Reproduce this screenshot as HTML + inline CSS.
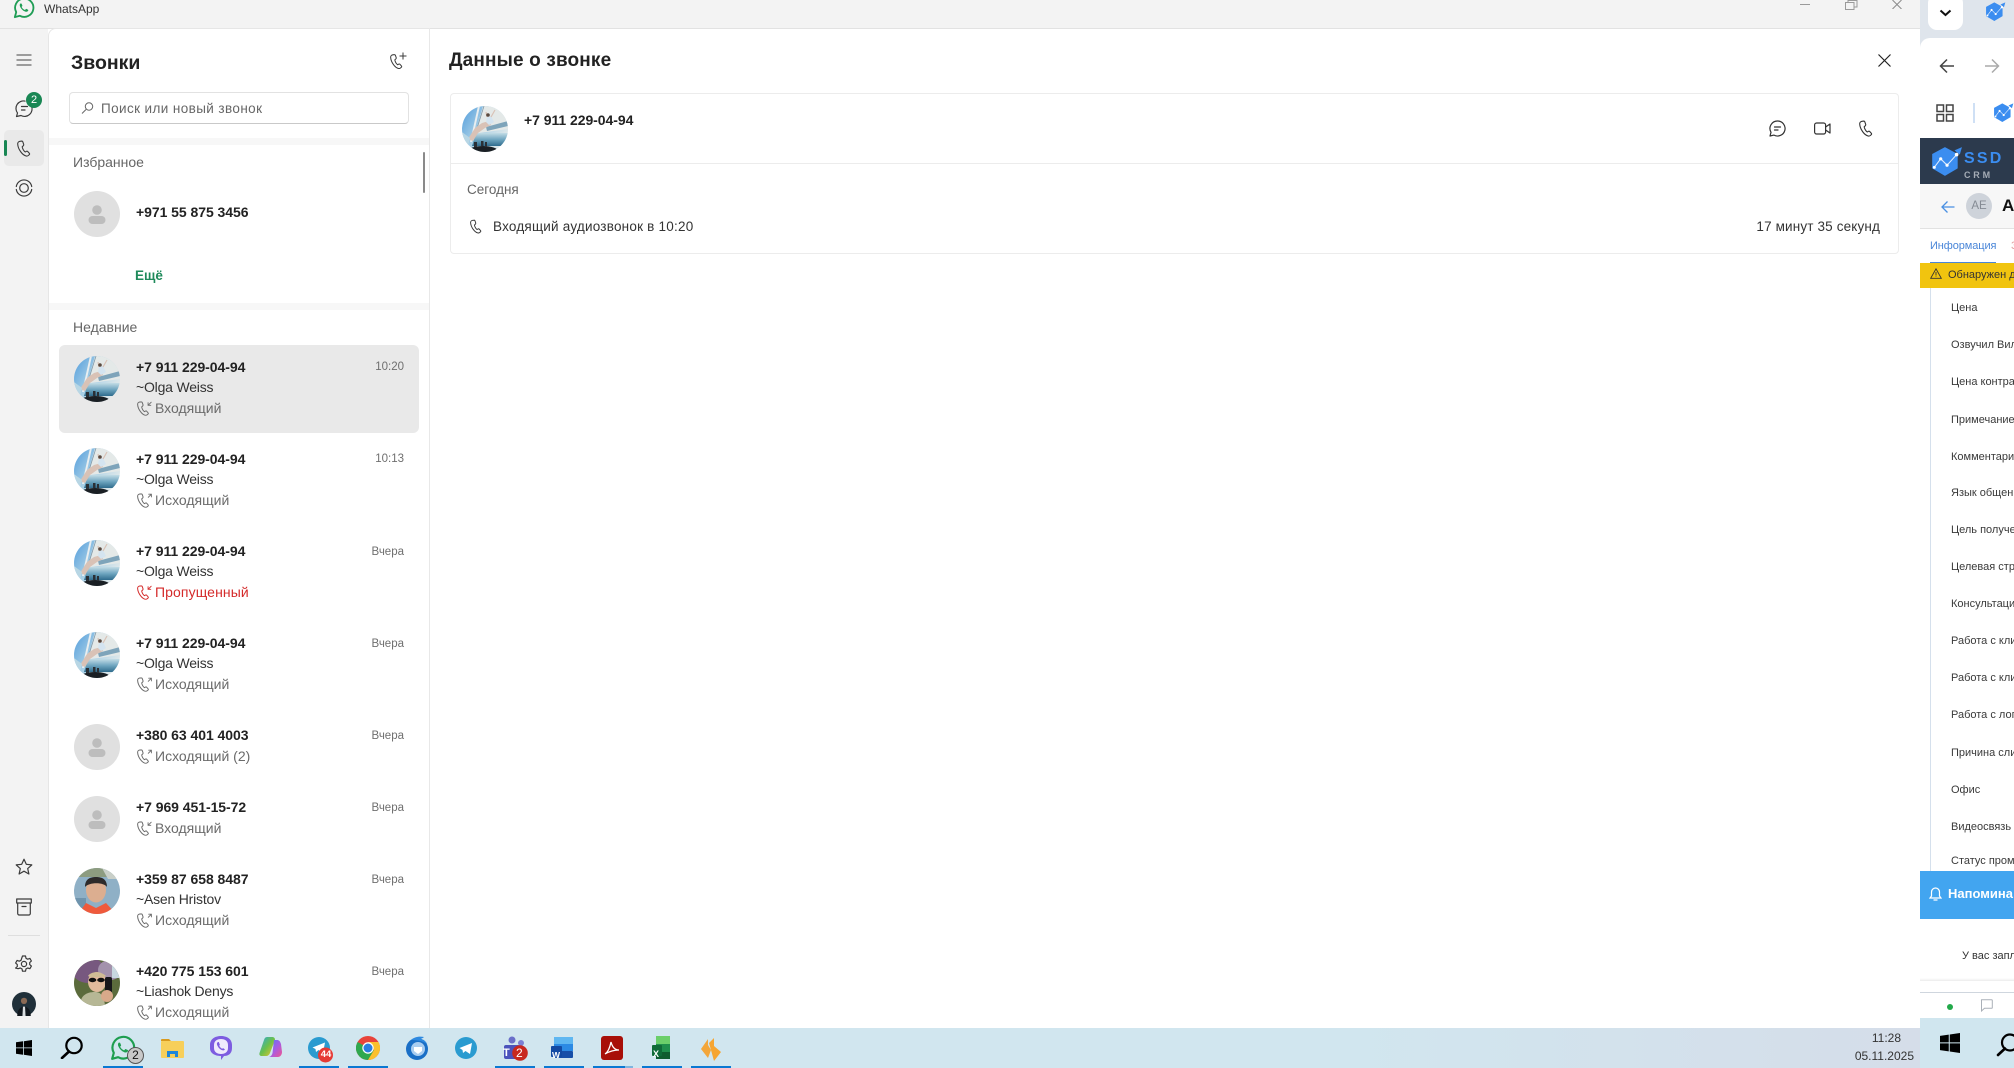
<!DOCTYPE html>
<html lang="ru"><head><meta charset="utf-8"><title>WhatsApp</title>
<style>
html,body{margin:0;padding:0;background:#fff}
#p{position:relative;width:2014px;height:1068px;overflow:hidden;background:#fff;font-family:"Liberation Sans",sans-serif;color:#222}
#p div,#p svg{position:absolute}
.t{white-space:nowrap;line-height:20px;height:20px;font-size:14px}
.n{font-weight:700;font-size:14px;color:#222;left:136px;letter-spacing:-.05px}
.m{left:136px;font-size:14px;color:#333;letter-spacing:-.2px}
.s{left:155px;font-size:14px;color:#6b6b6b}
.d{right:1610px;font-size:11.500px;color:#6f6f6f}
.l{left:1951px;font-size:11px;color:#3a3a3a}
.i{fill:none;stroke:#3b3b3b;stroke-width:1.2;stroke-linecap:round;stroke-linejoin:round}
.u{height:2px;top:1066px;background:#0a78d2}
</style></head><body>
<div id="p">
<svg width="0" height="0" style="position:absolute">
<defs>
<linearGradient id="sky" x1="0" y1="0" x2="1" y2=".6"><stop offset="0" stop-color="#4f9bdc"/><stop offset=".5" stop-color="#a9d0e6"/><stop offset="1" stop-color="#dfe8ea"/></linearGradient>
<linearGradient id="sea" x1="0" y1="0" x2="0" y2="1"><stop offset="0" stop-color="#c3dce6"/><stop offset=".5" stop-color="#6fa6c0"/><stop offset="1" stop-color="#2f6c8d"/></linearGradient>
<clipPath id="c46"><circle cx="23" cy="23" r="23"/></clipPath>
<symbol id="phone" viewBox="0 0 14 16"><path d="M3 .8 4.800.6c.5 0 .8.2 1 .7l.9 2.600c.1.5 0 .9-.3 1.200L5.200 6.300c.3 1.600 1.500 4 3 5.200l1.300-.7c.4-.2.9-.1 1.200.2l1.600 1.800c.4.4.4 1 0 1.300l-1 .9c-.6.5-1.400.7-2.200.5C5.600 14.700 1 9 .7 3.500.6 2.200 1.600 1 3 .8z" fill="none" stroke="currentColor" stroke-width="1.100" stroke-linejoin="round"/></symbol>
<symbol id="inc" viewBox="0 0 20 16"><use href="#phone" x="0" y="0" width="14" height="16"/><path d="M15.800 1 12.500 4.300M12.300 1.500v3h3" fill="none" stroke="currentColor" stroke-width="1" stroke-linecap="round"/></symbol>
<symbol id="out" viewBox="0 0 20 16"><use href="#phone" x="0" y="0" width="14" height="16"/><path d="M12.500 4.500 15.800 1.200M13 1h3v3" fill="none" stroke="currentColor" stroke-width="1" stroke-linecap="round"/></symbol>
<symbol id="sail" viewBox="0 0 46 46"><g clip-path="url(#c46)">
<rect width="46" height="46" fill="url(#sky)"/>
<path d="M21 0H46V23L17 27 12 32Z" fill="#e4e9e8"/>
<path d="M16 0 8 36H10L18 0Z" fill="#e9eef0"/>
<path d="M22 0 12 32" stroke="#7d97a8" stroke-width=".8" fill="none"/>
<path d="M24 21 46 15V20L25 25Z" fill="#7ea4ba"/>
<path d="M14 27H46V40H10Z" fill="url(#sea)"/>
<path d="M6 33 13 22 20 17 27 15 29 19 23 22 16 27 11 35Z" fill="#d9c2b6"/>
<path d="M25 11 29 10 32 16 27 19 24 16Z" fill="#d4e4f0"/>
<path d="M29 11 33 4M25 11 24 6" stroke="#d9c2b6" stroke-width="1.200" fill="none"/>
<circle cx="26" cy="9" r="1.800" fill="#5a4a40"/>
<ellipse cx="21" cy="45" rx="15" ry="5" fill="#1a1f24"/>
<path d="M12 36h3v5h-3zM19 35h2.500v5H19zM23 36h2v5h-2z" fill="#2a3036"/>
<path d="M0 26 8 32 6 40 0 38Z" fill="#b8d6e4"/>
</g></symbol>
<symbol id="gray" viewBox="0 0 46 46"><circle cx="23" cy="23" r="23" fill="#e0e0e0"/><circle cx="23" cy="19" r="4.800" fill="#bdbdbd"/><rect x="14.500" y="25" width="17" height="8" rx="4" fill="#bdbdbd"/></symbol>
<symbol id="wa" viewBox="0 0 24 24"><path d="M2 22 3.500 16.500A10 10 0 1 1 7.500 20.500Z" fill="none" stroke="currentColor" stroke-width="2" stroke-linejoin="round"/><path d="M8.500 6.800c-1 .6-1.400 1.700-1 3 .9 2.900 3.500 5.300 6 6.200 1.300.4 2.500-.1 3.100-1.200.2-.4.100-.7-.2-.9l-1.800-.9c-.3-.1-.5-.1-.7.2l-.6.8c-.2.2-.4.2-.6.1-1.400-.6-2.600-1.700-3.200-3-.1-.2-.1-.4.100-.6l.5-.6c.2-.2.200-.4.100-.6l-.8-1.900c-.2-.4-.7-.4-.9-.1z" fill="currentColor"/></symbol>
<symbol id="win" viewBox="0 0 16 16"><path d="M0 2.300 7 1.300V7.500H0ZM7.800 1.200 16 0V7.500H7.800ZM0 8.300H7V14.700L0 13.700ZM7.800 8.300H16V16L7.800 14.800Z" fill="#000"/></symbol>
<symbol id="hex" viewBox="0 0 32 32"><path d="M15 2 27 8.500V22L15 29 3 22V8.500Z" fill="#3b8df0"/><path d="M5 21 11 13 17 19 26 9" fill="none" stroke="#dcebff" stroke-width="1"/><path d="M24 5 31 2 29 9Z" fill="#3b8df0"/><circle cx="11" cy="13" r="1.500" fill="#fff"/><circle cx="17" cy="19" r="1.500" fill="#fff"/><circle cx="26" cy="9" r="1.700" fill="#fff"/><circle cx="5" cy="21" r="1.400" fill="#fff"/></symbol>
</defs></svg>

<!-- title bar -->
<div style="left:0;top:0;width:1920px;height:28px;background:#f3f3f3;border-bottom:1px solid #e2e2e2"></div>
<svg style="left:13px;top:-3px;color:#1f9d55" width="22" height="22"><use href="#wa" width="22" height="22"/></svg>
<div class="t" style="left:44px;top:-1px;font-size:12px;color:#333">WhatsApp</div>
<div style="left:1800px;top:4px;width:10px;height:1px;background:#9a9a9a"></div>
<svg style="left:1845px;top:0" width="13" height="10"><path d="M.5 2.500h8.500v7H.5zM3 2.500V.5h9v6.500h-3" fill="none" stroke="#9a9a9a"/></svg>
<svg style="left:1892px;top:0" width="10" height="9"><path d="M.5 0 9.500 9M9.500 0 .5 9" stroke="#8a8a8a" stroke-width="1"/></svg>

<!-- rail -->
<div style="left:0;top:29px;width:48px;height:999px;background:#f3f3f3"></div>
<div style="left:48px;top:28px;width:382px;height:1000px;background:#fff;border-left:1px solid #e6e6e6;border-top:1px solid #e6e6e6;border-top-left-radius:8px;box-sizing:border-box;border-right:1px solid #e8e8e8"></div>
<svg style="left:16px;top:54px" width="16" height="12"><path d="M.5 1H15.500M.5 6H15.500M.5 11H15.500" stroke="#444" stroke-width="1"/></svg>
<svg style="left:15px;top:99px" width="20" height="19"><path class="i" d="M16.500 7a7.500 7.500 0 0 1-10.500 9.500L1.500 17.500l1-3.500A7.500 7.500 0 0 1 10 2.100M6.500 7.500h6M6.500 11h3.500"/></svg>
<div style="left:26px;top:92px;width:16px;height:16px;border-radius:50%;background:#198754;color:#fff;font-size:11px;line-height:16px;text-align:center">2</div>
<div style="left:4px;top:130px;width:40px;height:36px;background:#e9e9e9;border-radius:5px"></div>
<div style="left:4px;top:140px;width:3px;height:16px;background:#198754;border-radius:2px"></div>
<svg style="left:17px;top:140px;color:#3b3b3b" width="14" height="17"><use href="#phone" width="14" height="17"/></svg>
<svg style="left:15px;top:179px" width="18" height="18"><circle cx="9" cy="9" r="4.300" class="i"/><path class="i" d="M1.300 7.500A7.800 7.800 0 0 1 16.700 7.500M1.300 10.500A7.800 7.800 0 0 0 16.700 10.500"/></svg>
<svg style="left:15px;top:858px" width="18" height="17"><path class="i" d="M9 1.200 11.300 6.300 16.800 6.900 12.700 10.600 13.900 16 9 13.200 4.100 16 5.300 10.600 1.200 6.900 6.700 6.300Z"/></svg>
<svg style="left:16px;top:898px" width="16" height="18"><path class="i" d="M.7 1h14.600v4H.7zM1.700 5v10.500a1.500 1.500 0 0 0 1.500 1.500h9.600a1.500 1.500 0 0 0 1.500-1.500V5M6 8.500h4"/></svg>
<div style="left:8px;top:935px;width:32px;height:1px;background:#dedede"></div>
<svg style="left:15px;top:955px" width="18" height="18" viewBox="0 0 18 18"><circle cx="9" cy="9" r="2.600" class="i"/><path class="i" d="M7.500 1h3l.5 2.300 1.700.9 2.200-.8 1.500 2.600-1.700 1.600v2l1.700 1.500-1.500 2.600-2.200-.7-1.700.9-.5 2.300h-3l-.5-2.300-1.700-.9-2.200.7L.6 13.100l1.700-1.500v-2L.6 8 2.100 5.400l2.200.8 1.700-.9z"/></svg>
<svg style="left:12px;top:992px" width="24" height="24" viewBox="0 0 23 23"><circle cx="11.500" cy="11.500" r="11.500" fill="#20303a"/><circle cx="11.500" cy="8.500" r="3" fill="#8a6a55"/><path d="M5 23c0-6 3-9 6.500-9s6.500 3 6.500 9z" fill="#11181e"/><path d="M10.500 14h2l.5 9h-3z" fill="#d8dde0"/></svg>

<!-- list header -->
<div class="t" style="left:71px;top:53px;font-size:19.500px;font-weight:700;color:#222;line-height:20px">Звонки</div>
<svg style="left:390px;top:52px;color:#3b3b3b" width="18" height="18" viewBox="0 0 18 18"><use href="#phone" x="0" y="2" width="13" height="15"/><path d="M13 .5V7.500M9.500 4H16.500" stroke="#3b3b3b" stroke-width="1" fill="none"/></svg>
<div style="left:69px;top:92px;width:340px;height:32px;box-sizing:border-box;border:1px solid #e2e2e2;border-bottom-color:#c9c9c9;border-radius:4px;background:#fff"></div>
<svg style="left:81px;top:102px" width="13" height="12"><circle cx="8" cy="4.500" r="3.700" fill="none" stroke="#666"/><path d="M5 7.500 1 11.500" stroke="#666"/></svg>
<div class="t" style="left:101px;top:99px;font-size:13.500px;color:#666;letter-spacing:.4px">Поиск или новый звонок</div>
<div style="left:49px;top:138px;width:380px;height:7px;background:#f7f7f7"></div>
<div style="left:423px;top:152px;width:2px;height:41px;background:#8a8a8a;border-radius:1px"></div>
<div class="t" style="left:73px;top:152px;color:#666;font-size:14px">Избранное</div>
<svg style="left:74px;top:191px" width="46" height="46"><use href="#gray" width="46" height="46"/></svg>
<div class="t n" style="top:202px">+971 55 875 3456</div>
<div class="t" style="left:135px;top:266px;font-size:13.500px;font-weight:700;color:#1f8a5b">Ещё</div>
<div style="left:49px;top:303px;width:380px;height:7px;background:#f7f7f7"></div>
<div class="t" style="left:73px;top:317px;color:#666;font-size:14px">Недавние</div>

<!-- rows -->
<div style="left:59px;top:345px;width:360px;height:88px;background:#e9e9e9;border-radius:6px"></div>

<svg style="left:74px;top:356px" width="46" height="46"><use href="#sail" width="46" height="46"/></svg>
<div class="t n" style="top:357px">+7 911 229-04-94</div><div class="t d" style="top:357px">10:20</div>
<div class="t m" style="top:377px">~Olga Weiss</div>
<svg style="left:137px;top:401px;color:#6b6b6b" width="18" height="15"><use href="#inc" width="18" height="15"/></svg><div class="t s" style="top:398px">Входящий</div>

<svg style="left:74px;top:448px" width="46" height="46"><use href="#sail" width="46" height="46"/></svg>
<div class="t n" style="top:449px">+7 911 229-04-94</div><div class="t d" style="top:449px">10:13</div>
<div class="t m" style="top:469px">~Olga Weiss</div>
<svg style="left:137px;top:493px;color:#6b6b6b" width="18" height="15"><use href="#out" width="18" height="15"/></svg><div class="t s" style="top:490px">Исходящий</div>

<svg style="left:74px;top:540px" width="46" height="46"><use href="#sail" width="46" height="46"/></svg>
<div class="t n" style="top:541px">+7 911 229-04-94</div><div class="t d" style="top:542px">Вчера</div>
<div class="t m" style="top:561px">~Olga Weiss</div>
<svg style="left:137px;top:585px;color:#d42a2a" width="18" height="15"><use href="#inc" width="18" height="15"/></svg><div class="t s" style="top:582px;color:#d42a2a;letter-spacing:.1px">Пропущенный</div>

<svg style="left:74px;top:632px" width="46" height="46"><use href="#sail" width="46" height="46"/></svg>
<div class="t n" style="top:633px">+7 911 229-04-94</div><div class="t d" style="top:634px">Вчера</div>
<div class="t m" style="top:653px">~Olga Weiss</div>
<svg style="left:137px;top:677px;color:#6b6b6b" width="18" height="15"><use href="#out" width="18" height="15"/></svg><div class="t s" style="top:674px">Исходящий</div>

<svg style="left:74px;top:724px" width="46" height="46"><use href="#gray" width="46" height="46"/></svg>
<div class="t n" style="top:725px">+380 63 401 4003</div><div class="t d" style="top:726px">Вчера</div>
<svg style="left:137px;top:749px;color:#6b6b6b" width="18" height="15"><use href="#out" width="18" height="15"/></svg><div class="t s" style="top:746px">Исходящий (2)</div>

<svg style="left:74px;top:796px" width="46" height="46"><use href="#gray" width="46" height="46"/></svg>
<div class="t n" style="top:797px">+7 969 451-15-72</div><div class="t d" style="top:798px">Вчера</div>
<svg style="left:137px;top:821px;color:#6b6b6b" width="18" height="15"><use href="#inc" width="18" height="15"/></svg><div class="t s" style="top:818px">Входящий</div>

<svg style="left:74px;top:868px" width="46" height="46" viewBox="0 0 46 46"><g clip-path="url(#c46)"><rect width="46" height="46" fill="#8fb0c6"/><rect width="46" height="9" fill="#8d9c80"/><path d="M28 0H46V11H34Z" fill="#c9cfc8"/><rect y="30" width="12" height="10" fill="#6f94ad"/><ellipse cx="22" cy="22" rx="10" ry="12.500" fill="#dcae90"/><path d="M11 19c0-8 5-10 11-10s11 2 11 10c-3-5-18-5-22 0z" fill="#2d2a2a"/><path d="M12 35 22 40 32 35 42 46H4Z" fill="#ef5a3c"/></g></svg>
<div class="t n" style="top:869px">+359 87 658 8487</div><div class="t d" style="top:870px">Вчера</div>
<div class="t m" style="top:889px">~Asen Hristov</div>
<svg style="left:137px;top:913px;color:#6b6b6b" width="18" height="15"><use href="#out" width="18" height="15"/></svg><div class="t s" style="top:910px">Исходящий</div>

<svg style="left:74px;top:960px" width="46" height="46" viewBox="0 0 46 46"><g clip-path="url(#c46)"><rect width="46" height="46" fill="#5b6b3c"/><ellipse cx="14" cy="10" rx="16" ry="13" fill="#77587f"/><ellipse cx="36" cy="10" rx="12" ry="10" fill="#a392ac"/><rect x="38" y="0" width="8" height="18" fill="#c8d8e0"/><ellipse cx="23" cy="22" rx="9" ry="10" fill="#e0ba9c"/><path d="M14 16c3-5 13-5 18 0l-2 1H16z" fill="#d0bd95"/><ellipse cx="18.500" cy="20" rx="3.800" ry="2.200" fill="#111"/><ellipse cx="27" cy="20" rx="3.800" ry="2.200" fill="#111"/><path d="M6 46c0-10 6-14 15-14 5 0 9 3 10 14z" fill="#b6b795"/><rect x="31" y="17" width="7" height="16" rx="2" fill="#17171a"/><ellipse cx="33" cy="36" rx="6" ry="6" fill="#d8a98a"/></g></svg>
<div class="t n" style="top:961px">+420 775 153 601</div><div class="t d" style="top:962px">Вчера</div>
<div class="t m" style="top:981px">~Liashok Denys</div>
<svg style="left:137px;top:1005px;color:#6b6b6b" width="18" height="15"><use href="#out" width="18" height="15"/></svg><div class="t s" style="top:1002px">Исходящий</div>

<!-- detail -->
<div class="t" style="left:449px;top:51px;font-size:19px;font-weight:700;color:#222;letter-spacing:.15px">Данные о звонке</div>
<svg style="left:1878px;top:54px" width="13" height="13"><path d="M.5.5 12.500 12.500M12.500.5.5 12.500" stroke="#222" stroke-width="1.200"/></svg>
<div style="left:450px;top:93px;width:1449px;height:161px;box-sizing:border-box;border:1px solid #ececec;border-radius:4px;background:#fff"></div>
<div style="left:451px;top:163px;width:1447px;height:1px;background:#ececec"></div>
<svg style="left:462px;top:106px" width="46" height="46"><use href="#sail" width="46" height="46"/></svg>
<div class="t" style="left:524px;top:110px;font-size:14px;font-weight:700;color:#222;letter-spacing:-.05px">+7 911 229-04-94</div>
<svg style="left:1769px;top:120px" width="17" height="17"><path class="i" style="stroke:#333" d="M8.500 1a7.500 7.500 0 1 1-3.500 14.100L1 16l1-3.700A7.500 7.500 0 0 1 8.500 1zM5.500 7h6M5.500 10h3.500"/></svg>
<svg style="left:1814px;top:122px" width="17" height="14"><rect x=".6" y="1" width="11" height="11" rx="2" class="i" style="stroke:#333"/><path class="i" style="stroke:#333" d="M11.600 5 16 2v9l-4.400-3"/></svg>
<svg style="left:1859px;top:120px;color:#333" width="14" height="17"><use href="#phone" width="14" height="17"/></svg>
<div class="t" style="left:467px;top:180px;font-size:13.500px;color:#666">Сегодня</div>
<svg style="left:470px;top:219px;color:#333" width="12" height="15"><use href="#phone" width="12" height="15"/></svg>
<div class="t" style="left:493px;top:217px;font-size:13.500px;color:#333;letter-spacing:.22px">Входящий аудиозвонок в 10:20</div>
<div class="t" style="right:134px;top:217px;font-size:13.500px;color:#333;letter-spacing:.15px">17 минут 35 секунд</div>

<!-- browser -->
<div style="left:1920px;top:0;width:94px;height:1018px;background:#dfe5ec"></div>
<div style="left:1928px;top:-6px;width:35px;height:36px;background:#fff;border-radius:9px"></div>
<svg style="left:1939px;top:9px" width="13" height="8"><path d="M1.500 1.500 6.500 6 11.500 1.500" fill="none" stroke="#111" stroke-width="2"/></svg>
<svg style="left:1984px;top:1px" width="22" height="22"><use href="#hex" width="22" height="22"/></svg>
<div style="left:1920px;top:38px;width:94px;height:980px;background:#fff;border-top-left-radius:10px"></div>
<svg style="left:1939px;top:58px" width="16" height="16"><path d="M15 8H1.500M8 1.500 1.500 8 8 14.500" fill="none" stroke="#444" stroke-width="1.500"/></svg>
<svg style="left:1984px;top:58px" width="16" height="16"><path d="M1 8H14.500M8 1.500 14.500 8 8 14.500" fill="none" stroke="#aaa" stroke-width="1.500"/></svg>
<svg style="left:1936px;top:104px" width="18" height="18"><path d="M1 1h6.500v6.500H1zM10.500 1H17v6.500h-6.500zM1 10.500h6.500V17H1zM10.500 10.500H17V17h-6.500z" fill="none" stroke="#444" stroke-width="1.500"/></svg>
<div style="left:1973px;top:103px;width:2px;height:20px;background:#cfe0f5"></div>
<svg style="left:1992px;top:102px" width="22" height="22"><use href="#hex" width="22" height="22"/></svg>
<div style="left:1920px;top:138px;width:94px;height:46px;background:#2c3a4d"></div>
<svg style="left:1929px;top:145px" width="34" height="34"><use href="#hex" width="34" height="34"/></svg>
<div class="t" style="left:1964px;top:149px;font-size:16px;font-weight:700;color:#3b8df0;letter-spacing:2.200px">SSD</div>
<div class="t" style="left:1964px;top:165px;font-size:9px;font-weight:700;color:#a5acb6;letter-spacing:2.800px">CRM</div>
<div style="left:1920px;top:184px;width:94px;height:45px;background:#f7f7f7;border-bottom:1px solid #e2e2e2;box-sizing:border-box"></div>
<svg style="left:1941px;top:200px" width="14" height="14"><path d="M13.500 7H1M6.500 1.500 1 7l5.500 5.500" fill="none" stroke="#4a90e2" stroke-width="1.300"/></svg>
<div style="left:1966px;top:193px;width:26px;height:26px;border-radius:50%;background:#ced3da;color:#858b94;font-size:11.500px;line-height:26px;text-align:center">AE</div>
<div class="t" style="left:2002px;top:196px;font-size:17px;font-weight:700;color:#111">A</div>
<div class="t" style="left:1930px;top:236px;font-size:11px;color:#4a86d8;letter-spacing:-.1px">Информация</div>
<div class="t" style="left:2011px;top:236px;font-size:11px;color:#e3a5a5">З</div>
<div style="left:1930px;top:262px;width:66px;height:1px;background:#4a86d8"></div>
<div style="left:1920px;top:263px;width:94px;height:25px;background:#f1c40f"></div>
<svg style="left:1930px;top:268px" width="12" height="11"><path d="M6 .8 11.300 10.300H.7ZM6 4v3.500M6 8.500v.5" fill="none" stroke="#333" stroke-width=".9"/></svg>
<div class="t" style="left:1948px;top:265px;font-size:11px;color:#333">Обнаружен д</div>
<div style="left:1930px;top:288px;width:1px;height:583px;background:#d5e0ec"></div>
<div class="t l" style="top:298px">Цена</div>
<div class="t l" style="top:335px">Озвучил Вил</div>
<div class="t l" style="top:372px">Цена контра</div>
<div class="t l" style="top:410px">Примечание</div>
<div class="t l" style="top:447px">Комментари</div>
<div class="t l" style="top:483px">Язык общени</div>
<div class="t l" style="top:520px">Цель получе</div>
<div class="t l" style="top:557px">Целевая стра</div>
<div class="t l" style="top:594px">Консультаци</div>
<div class="t l" style="top:631px">Работа с кли</div>
<div class="t l" style="top:668px">Работа с кли</div>
<div class="t l" style="top:705px">Работа с лог</div>
<div class="t l" style="top:743px">Причина сли</div>
<div class="t l" style="top:780px">Офис</div>
<div class="t l" style="top:817px">Видеосвязь с</div>
<div class="t l" style="top:851px">Статус пром</div>
<div style="left:1920px;top:871px;width:94px;height:48px;background:#42a5f0"></div>
<svg style="left:1929px;top:887px" width="13" height="15"><path d="M6.500 1a4 4 0 0 0-4 4v4L1 11h11l-1.500-2V5a4 4 0 0 0-4-4zM4.500 13h4" fill="none" stroke="#fff" stroke-width="1.200"/></svg>
<div class="t" style="left:1948px;top:884px;font-size:13px;font-weight:700;color:#fff">Напомина</div>
<div class="t" style="left:1962px;top:946px;font-size:11px;color:#333">У вас запла</div>
<div style="left:1920px;top:978px;width:94px;height:3px;background:linear-gradient(#fff,#ececec)"></div>
<div style="left:1920px;top:992px;width:94px;height:1px;background:#cfd6de"></div>
<div style="left:1947px;top:1004px;width:6px;height:6px;border-radius:50%;background:#22a94a"></div>
<svg style="left:1980px;top:999px" width="13" height="13"><path d="M1.500.7h10a.8.8 0 0 1 .8.8v7a.8.8 0 0 1-.8.8H4.500L1.500 12V1.500a.8.8 0 0 1 0-.8z" fill="none" stroke="#aab0b8"/></svg>

<!-- taskbar -->
<div style="left:0;top:1028px;width:1920px;height:40px;background:linear-gradient(90deg,#d1e6ef 0,#d1e6ef 70%,#d5dde9 100%)"></div>
<div style="left:1920px;top:1018px;width:94px;height:50px;background:#d0e6ef"></div>
<svg style="left:16px;top:1040px" width="16" height="16"><use href="#win" width="16" height="16"/></svg>
<svg style="left:60px;top:1036px" width="24" height="23"><circle cx="14" cy="9.500" r="7.700" fill="none" stroke="#000" stroke-width="2.200"/><path d="M9 15.500 2 22" stroke="#000" stroke-width="2.600" stroke-linecap="round"/></svg>
<svg style="left:110px;top:1035px;color:#1e9e50" width="26" height="26"><use href="#wa" width="26" height="26"/></svg>
<div style="left:127px;top:1047px;width:15px;height:15px;border-radius:50%;background:#c9c9c9;border:1px solid #555;color:#111;font-size:12px;line-height:15px;text-align:center">2</div>
<svg style="left:161px;top:1038px" width="23" height="20"><path d="M0 2a1 1 0 0 1 1-1h7l2 2H0z" fill="#d99a1e"/><rect y="3" width="23" height="17" rx="1" fill="#f7cf5a"/><path d="M6 19v-6h11v6h-3v-3H9v3z" fill="#1f86d8"/></svg>
<svg style="left:210px;top:1036px" width="22" height="24"><path d="M11 0c6 0 11 3 11 9v3c0 6-4 8-8 8l-3 4v-4c-5 0-11-2-11-8V9c0-6 5-9 11-9z" fill="#7d5ce0"/><path d="M4 9c0-4 3-6 7-6s7 2 7 6v3c0 4-3 6-7 6s-7-2-7-6z" fill="#efeafc"/><path d="M8 6c-1 .5-1.300 1.500-1 2.500 1 3 3 5 5.500 5.800 1 .3 1.900 0 2.400-.9l-1.800-1.300-.9.700c-1.300-.6-2.400-1.700-3-3l.7-.9L8.800 6z" fill="#7d5ce0"/></svg>
<svg style="left:258px;top:1036px" width="24" height="24"><defs><linearGradient id="cp1" x1="0" y1="0" x2="1" y2="1"><stop offset="0" stop-color="#2aa8e0"/><stop offset=".5" stop-color="#6bc04b"/><stop offset="1" stop-color="#f4c430"/></linearGradient><linearGradient id="cp2" x1="0" y1="0" x2="1" y2="1"><stop offset="0" stop-color="#4f7df0"/><stop offset=".5" stop-color="#a55ce6"/><stop offset="1" stop-color="#f0568f"/></linearGradient></defs><path d="M9 1h5c2 0 3 1 3 3l-5 13c-1 2-2 3-4 3H4c-2 0-3-1-2.500-3L6 4c.5-2 1.500-3 3-3z" fill="url(#cp1)"/><path d="M16 4h3c2 0 3 1 4 4l1 8c0 3-2 5-4 5h-9c2-.5 3-2 3.500-4z" fill="url(#cp2)"/></svg>
<svg style="left:308px;top:1036px" width="26" height="28"><circle cx="11" cy="12" r="11" fill="#2a9bd0"/><path d="M4.500 11.500 17 6.500 15 17 10.500 14 8 16 7.500 13Z" fill="#fff"/><circle cx="17.500" cy="19" r="7.500" fill="#e63a35"/></svg>
<div class="t" style="left:318px;top:1045px;width:16px;text-align:center;font-size:9.500px;color:#fff;font-weight:700">44</div>
<svg style="left:356px;top:1036px" width="24" height="24"><circle cx="12" cy="12" r="12" fill="#e8433a"/><path d="M12 12 1.600 6A12 12 0 0 0 12 24l6-10z" fill="#2fa84f"/><path d="M12 6h10.400A12 12 0 0 1 12 24l6-10z" fill="#fbc02d"/><circle cx="12" cy="12" r="5.700" fill="#fff"/><circle cx="12" cy="12" r="4.500" fill="#2a7de1"/></svg>
<svg style="left:405px;top:1036px" width="24" height="24"><circle cx="12" cy="13" r="11" fill="#1a6fc6"/><circle cx="13" cy="13" r="7" fill="#a9cdf0"/><path d="M9 11h8v4l-4 3-4-3z" fill="#fff"/><path d="M6 4c3-3 8-4 13-3-1 1-3 2-4 2 3 0 6 2 7 5-4-3-10-4-16-4z" fill="#2f8ae0"/></svg>
<svg style="left:455px;top:1037px" width="22" height="22"><circle cx="11" cy="11" r="11" fill="#2a9bd0"/><path d="M4.500 11 17 6 15 17 10.500 14 8 16 7.500 13Z" fill="#fff"/></svg>
<svg style="left:502px;top:1036px" width="26" height="26"><circle cx="10" cy="4" r="3.500" fill="#6a6fc9"/><circle cx="19" cy="7" r="3" fill="#7b80d4"/><rect x="2" y="9" width="16" height="14" rx="2" fill="#4b53bc"/><circle cx="18" cy="17" r="7.800" fill="#c8281f"/></svg>
<div class="t" style="left:503px;top:1043px;font-size:11px;font-weight:700;color:#fff">T</div>
<div class="t" style="left:516px;top:1043px;font-size:12px;color:#fff">2</div>
<svg style="left:551px;top:1036px" width="22" height="24"><rect x="3" y="1" width="19" height="7" fill="#5fb7f1"/><rect x="3" y="8" width="19" height="7" fill="#2b8ae4"/><rect x="3" y="15" width="19" height="7" rx="1" fill="#174fa8"/><rect y="10" width="11" height="11" rx="1" fill="#124aa3"/></svg>
<div class="t" style="left:552px;top:1045px;font-size:8.500px;font-weight:700;color:#fff">W</div>
<svg style="left:601px;top:1036px" width="22" height="24"><rect width="22" height="24" rx="3" fill="#a80f08"/><path d="M4 18c3-2 5-7 6-12 1 4 3 8 8 8-4 0-9 1-14 4z" fill="none" stroke="#fff" stroke-width="1.300"/></svg>
<svg style="left:652px;top:1036px" width="18" height="24"><rect x="4" y="0" width="14" height="8" fill="#6bcf6a"/><rect x="4" y="8" width="14" height="8" fill="#1f8f4c"/><rect x="4" y="16" width="14" height="7" fill="#0f5c2f"/><rect y="9" width="10" height="11" rx="1" fill="#0f6b38"/></svg>
<div class="t" style="left:653px;top:1044px;font-size:9px;font-weight:700;color:#fff">X</div>
<svg style="left:701px;top:1036px" width="20" height="26"><path d="M7 3 0 13l7 9 3-8-3-5z" fill="#f3a63a"/><path d="M8 7 13 2v8l7 6-7 9-3-11z" fill="#f6a531"/></svg>
<div class="u" style="left:103px;width:40px"></div>
<div class="u" style="left:299px;width:40px"></div>
<div class="u" style="left:348px;width:40px"></div>
<div class="u" style="left:495px;width:40px"></div>
<div class="u" style="left:544px;width:40px"></div>
<div class="u" style="left:593px;width:40px"></div>
<div class="u" style="left:625px;width:8px;background:#7fb5df"></div>
<div class="u" style="left:642px;width:40px"></div>
<div class="u" style="left:691px;width:40px"></div>
<div class="t" style="right:113px;top:1028px;font-size:12px;color:#333">11:28</div>
<div class="t" style="right:100px;top:1046px;font-size:12px;color:#333">05.11.2025</div>
<svg style="left:1940px;top:1033px" width="20" height="20"><use href="#win" width="20" height="20"/></svg>
<svg style="left:1996px;top:1033px" width="24" height="24"><circle cx="14" cy="9.500" r="8" fill="none" stroke="#000" stroke-width="2.200"/><path d="M9 15.500 2 22" stroke="#000" stroke-width="2.600" stroke-linecap="round"/></svg>
</div>
</body></html>
